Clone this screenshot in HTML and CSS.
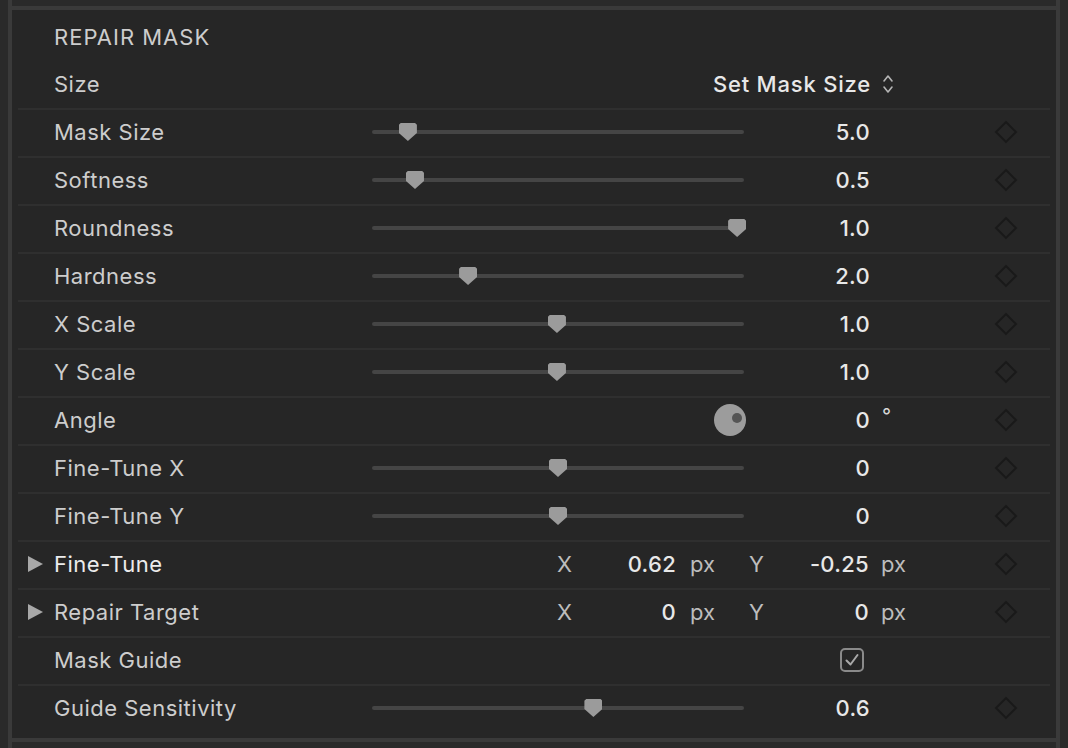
FILE: index.html
```html
<!DOCTYPE html>
<html lang="en">
<head>
    <meta charset="UTF-8">
    <title>Repair Mask</title>
    <link rel="stylesheet" href="styles.css">
</head>
<body>
<div class="column">
    <div class="panel">
        <div class="title">REPAIR MASK</div>

        <div class="row first">
            <div class="label">Size</div>
            <div></div>
            <div class="value popup">Set Mask Size</div>
            <div class="unit">
                <svg class="updown" width="12" height="22" viewBox="0 0 12 22"><path d="M2 8 L6 3 L10 8 M2 14 L6 19 L10 14" fill="none" stroke="#b5b5b5" stroke-width="1.6" stroke-linecap="round" stroke-linejoin="round"/></svg>
            </div>
            <div></div>
        </div>

        <div class="row">
            <div class="label">Mask Size</div>
            <div class="slider"><div class="range"><span class="thumb" style="left: 7.6%"></span></div></div>
            <div class="value">5.0</div>
            <div></div>
            <div class="key"><svg width="24" height="24" viewBox="0 0 24 24"><path d="M12 2 L22 12 L12 22 L2 12 Z" fill="none" stroke="#191919" stroke-width="1.8"/></svg></div>
        </div>

        <div class="row">
            <div class="label">Softness</div>
            <div class="slider"><div class="range"><span class="thumb" style="left: 9.6%"></span></div></div>
            <div class="value">0.5</div>
            <div></div>
            <div class="key"><svg width="24" height="24" viewBox="0 0 24 24"><path d="M12 2 L22 12 L12 22 L2 12 Z" fill="none" stroke="#191919" stroke-width="1.8"/></svg></div>
        </div>

        <div class="row">
            <div class="label">Roundness</div>
            <div class="slider"><div class="range"><span class="thumb" style="left: 100.6%"></span></div></div>
            <div class="value">1.0</div>
            <div></div>
            <div class="key"><svg width="24" height="24" viewBox="0 0 24 24"><path d="M12 2 L22 12 L12 22 L2 12 Z" fill="none" stroke="#191919" stroke-width="1.8"/></svg></div>
        </div>

        <div class="row">
            <div class="label">Hardness</div>
            <div class="slider"><div class="range"><span class="thumb" style="left: 24.6%"></span></div></div>
            <div class="value">2.0</div>
            <div></div>
            <div class="key"><svg width="24" height="24" viewBox="0 0 24 24"><path d="M12 2 L22 12 L12 22 L2 12 Z" fill="none" stroke="#191919" stroke-width="1.8"/></svg></div>
        </div>

        <div class="row">
            <div class="label">X Scale</div>
            <div class="slider"><div class="range"><span class="thumb" style="left: 49.7%"></span></div></div>
            <div class="value">1.0</div>
            <div></div>
            <div class="key"><svg width="24" height="24" viewBox="0 0 24 24"><path d="M12 2 L22 12 L12 22 L2 12 Z" fill="none" stroke="#191919" stroke-width="1.8"/></svg></div>
        </div>

        <div class="row">
            <div class="label">Y Scale</div>
            <div class="slider"><div class="range"><span class="thumb" style="left: 49.7%"></span></div></div>
            <div class="value">1.0</div>
            <div></div>
            <div class="key"><svg width="24" height="24" viewBox="0 0 24 24"><path d="M12 2 L22 12 L12 22 L2 12 Z" fill="none" stroke="#191919" stroke-width="1.8"/></svg></div>
        </div>

        <div class="row">
            <div class="label">Angle</div>
            <div class="dial"><span class="dot"></span></div>
            <div class="value">0</div>
            <div class="unit deg">°</div>
            <div class="key"><svg width="24" height="24" viewBox="0 0 24 24"><path d="M12 2 L22 12 L12 22 L2 12 Z" fill="none" stroke="#191919" stroke-width="1.8"/></svg></div>
        </div>

        <div class="row">
            <div class="label">Fine-Tune X</div>
            <div class="slider"><div class="range"><span class="thumb" style="left: 50%"></span></div></div>
            <div class="value">0</div>
            <div></div>
            <div class="key"><svg width="24" height="24" viewBox="0 0 24 24"><path d="M12 2 L22 12 L12 22 L2 12 Z" fill="none" stroke="#191919" stroke-width="1.8"/></svg></div>
        </div>

        <div class="row">
            <div class="label">Fine-Tune Y</div>
            <div class="slider"><div class="range"><span class="thumb" style="left: 50%"></span></div></div>
            <div class="value">0</div>
            <div></div>
            <div class="key"><svg width="24" height="24" viewBox="0 0 24 24"><path d="M12 2 L22 12 L12 22 L2 12 Z" fill="none" stroke="#191919" stroke-width="1.8"/></svg></div>
        </div>

        <div class="row">
            <div class="label group bright"><span class="disclose"></span>Fine-Tune</div>
            <div class="xy">
                <span></span>
                <span class="axis">X</span>
                <span class="value">0.62</span>
                <span class="px">px</span>
                <span class="axis">Y</span>
                <span class="value">-0.25</span>
                <span class="px last">px</span>
            </div>
            <div class="key"><svg width="24" height="24" viewBox="0 0 24 24"><path d="M12 2 L22 12 L12 22 L2 12 Z" fill="none" stroke="#191919" stroke-width="1.8"/></svg></div>
        </div>

        <div class="row">
            <div class="label group"><span class="disclose"></span>Repair Target</div>
            <div class="xy">
                <span></span>
                <span class="axis">X</span>
                <span class="value">0</span>
                <span class="px">px</span>
                <span class="axis">Y</span>
                <span class="value">0</span>
                <span class="px last">px</span>
            </div>
            <div class="key"><svg width="24" height="24" viewBox="0 0 24 24"><path d="M12 2 L22 12 L12 22 L2 12 Z" fill="none" stroke="#191919" stroke-width="1.8"/></svg></div>
        </div>

        <div class="row">
            <div class="label">Mask Guide</div>
            <div></div>
            <div class="check">
                <svg width="24" height="24" viewBox="0 0 24 24"><rect x="1" y="1" width="22" height="22" rx="4" fill="none" stroke="#8a8a8a" stroke-width="2"/><path d="M6.5 12.5 L10.5 16.5 L17.5 7" fill="none" stroke="#a9a9a9" stroke-width="2" stroke-linecap="round" stroke-linejoin="round"/></svg>
            </div>
            <div></div>
            <div></div>
        </div>

        <div class="row">
            <div class="label">Guide Sensitivity</div>
            <div class="slider"><div class="range"><span class="thumb" style="left: 60%"></span></div></div>
            <div class="value">0.6</div>
            <div></div>
            <div class="key"><svg width="24" height="24" viewBox="0 0 24 24"><path d="M12 2 L22 12 L12 22 L2 12 Z" fill="none" stroke="#191919" stroke-width="1.8"/></svg></div>
        </div>
    </div>
</div>
</body>
</html>
```

FILE: styles.css
```css
* { box-sizing: border-box; }
body { margin: 0; background: #2a2a2a; font-family: Inter, "Noto Sans", sans-serif; font-size: 22px; color: #cdcdcd; }

.column { margin-left: 8px; width: 1052px; height: 748px; padding-top: 6px; border-left: 4px solid #3a3a3a; border-right: 4px solid #3a3a3a; }
.panel { background: #262626; border-top: 4px solid #3a3a3a; border-bottom: 4px solid #3a3a3a; padding: 0 6px 6px; }

.title { height: 50px; display: flex; align-items: center; padding: 3px 0 0 36px; letter-spacing: 1px; }

.row { display: grid; grid-template-columns: 354px 372px 126px 114px 44px; align-items: center; height: 48px; padding-bottom: 2px; border-top: 2px solid #2f2f2f; }
.row.first { border-top: none; padding-bottom: 0; }

.label { padding-left: 36px; letter-spacing: 0.5px; display: flex; align-items: center; white-space: nowrap; }
.label.group { padding-left: 10px; }
.label.bright { color: #ececec; }
.disclose { width: 0; height: 0; border-top: 8px solid transparent; border-bottom: 8px solid transparent; border-left: 15px solid #a8a8a8; margin-right: 11px; }

.value { text-align: right; font-weight: 500; color: #e8e8e8; letter-spacing: 0.3px; white-space: nowrap; }
.popup { display: flex; justify-content: flex-end; letter-spacing: 0.8px; margin-right: -1px; }
.unit { padding-left: 12px; display: flex; align-items: center; }
.deg { align-self: start; padding-top: 6px; font-size: 20px; color: #d8d8d8; }
.key { display: flex; justify-content: center; }

.slider { height: 4px; border-radius: 2px; background: #454545; }
.range { position: relative; height: 4px; margin-right: 18px; }
.thumb { position: absolute; top: -7px; width: 18px; height: 18px; background: #9b9b9b; clip-path: polygon(10% 0, 90% 0, 100% 10%, 100% 56%, 50% 100%, 0 56%, 0 10%); }

.dial { justify-self: end; margin-right: -2px; width: 32px; height: 32px; border-radius: 50%; background: #9c9c9c; position: relative; }
.dot { position: absolute; left: 18px; top: 9px; width: 10px; height: 10px; border-radius: 50%; background: #555; }

.check { justify-self: end; margin-right: 6px; display: flex; }

.xy { grid-column: 2 / 5; display: grid; grid-template-columns: 185px 20px 99px 73px 20px 100px auto; align-items: center; }
.axis { color: #bdbdbd; }
.px { color: #bdbdbd; padding-left: 14px; }
.px.last { padding-left: 12px; }
```
